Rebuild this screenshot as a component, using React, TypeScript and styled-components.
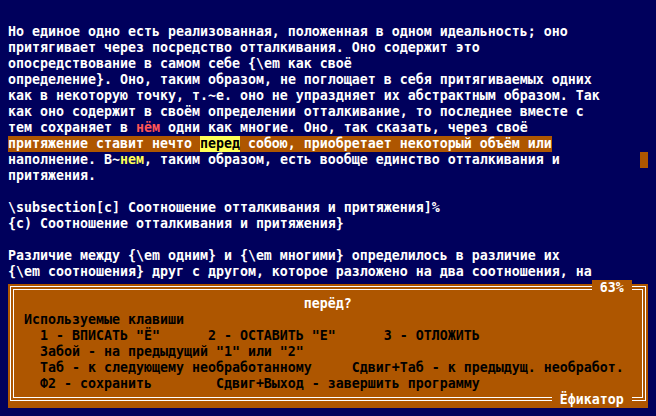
import styled, { createGlobalStyle } from 'styled-components'

const NAVY = '#00005c'
const RUST = '#ae5600'
const YELLOW = '#ffff55'

const Global = createGlobalStyle`
  html, body {
    margin: 0;
    background: ${NAVY};
  }
`

const Screen = styled.div`
  width: 640px;
  height: 400px;
  padding: 8px;
  background: ${NAVY};
  color: #fff;
  font-family: "DejaVu Sans Mono", "Liberation Mono", monospace;
  font-size: 13.29px;
  font-weight: bold;
  line-height: 16px;
  white-space: pre;
  overflow: hidden;
`

const Line = styled.div`
  height: 16px;
`

const Band = styled.span`
  display: inline-block;
  height: 16px;
  vertical-align: top;
  background: ${RUST};
`

const Mark = styled.span`
  display: inline-block;
  height: 16px;
  vertical-align: top;
  background: ${YELLOW};
  color: #000;
`

const Tint = styled.span<{ $c: string }>`
  color: ${(p) => p.$c};
`

const Cursor = styled.span`
  float: right;
  width: 8px;
  height: 16px;
  background: ${RUST};
`

const Dialog = styled.div`
  position: relative;
  height: 128px;
  background: linear-gradient(${NAVY} 0 4px, ${RUST} 4px);
  color: #000;

  &::before {
    content: '';
    position: absolute;
    top: 6px;
    left: 2px;
    right: 2px;
    bottom: 7px;
    border: 4px double #fff;
  }
`

const Tag = styled.span`
  position: relative;
  z-index: 1;
  background: ${RUST};
  color: #fff;
`

const Title = styled.span`
  color: #fff;
`

const sp = (n: number) => ' '.repeat(n)

export default function App() {
  return (
    <>
      <Global />
      <Screen>
        <Line />
        <Line>Но единое одно есть реализованная, положенная в одном идеальность; оно</Line>
        <Line>притягивает через посредство отталкивания. Оно содержит это</Line>
        <Line>опосредствование в самом себе {'{\\em'} как своё</Line>
        <Line>определение{'}'}. Оно, таким образом, не поглощает в себя притягиваемых одних</Line>
        <Line>как в некоторую точку, т.~е. оно не упраздняет их абстрактным образом. Так</Line>
        <Line>как оно содержит в своём определении отталкивание, то последнее вместе с</Line>
        <Line>
          тем сохраняет в <Tint $c="#ff5555">нём</Tint> одни как многие. Оно, так сказать, через своё
        </Line>
        <Line>
          <Band>
            притяжение ставит нечто <Mark>перед</Mark> собою, приобретает некоторый объём или
          </Band>
        </Line>
        <Line>
          наполнение. В~<Tint $c={YELLOW}>нем</Tint>, таким образом, есть вообще единство отталкивания и
          <Cursor />
        </Line>
        <Line>притяжения.</Line>
        <Line />
        <Line>{'\\subsection[c] Соотношение отталкивания и притяжения]%'}</Line>
        <Line>{'{c) Соотношение отталкивания и притяжения}'}</Line>
        <Line />
        <Line>{'Различие между {\\em одним} и {\\em многими} определилось в различие их'}</Line>
        <Line>{'{\\em соотношения} друг с другом, которое разложено на два соотношения, на'}</Line>
        <Dialog>
          <Line>
            {sp(73)}
            <Tag> 63% </Tag>
          </Line>
          <Line>
            {sp(37)}
            <Title>перёд?</Title>
          </Line>
          <Line>{'  Используемые клавиши'}</Line>
          <Line>{'    1 - ВПИСАТЬ "Ё"      2 - ОСТАВИТЬ "Е"      3 - ОТЛОЖИТЬ'}</Line>
          <Line>{'    Забой - на предыдущий "1" или "2"'}</Line>
          <Line>{'    Таб - к следующему необработанному     Сдвиг+Таб - к предыдущ. необработ.'}</Line>
          <Line>{'    Ф2 - сохранить        Сдвиг+Выход - завершить программу'}</Line>
          <Line>
            {sp(68)}
            <Tag> Ёфикатор </Tag>
          </Line>
        </Dialog>
      </Screen>
    </>
  )
}
